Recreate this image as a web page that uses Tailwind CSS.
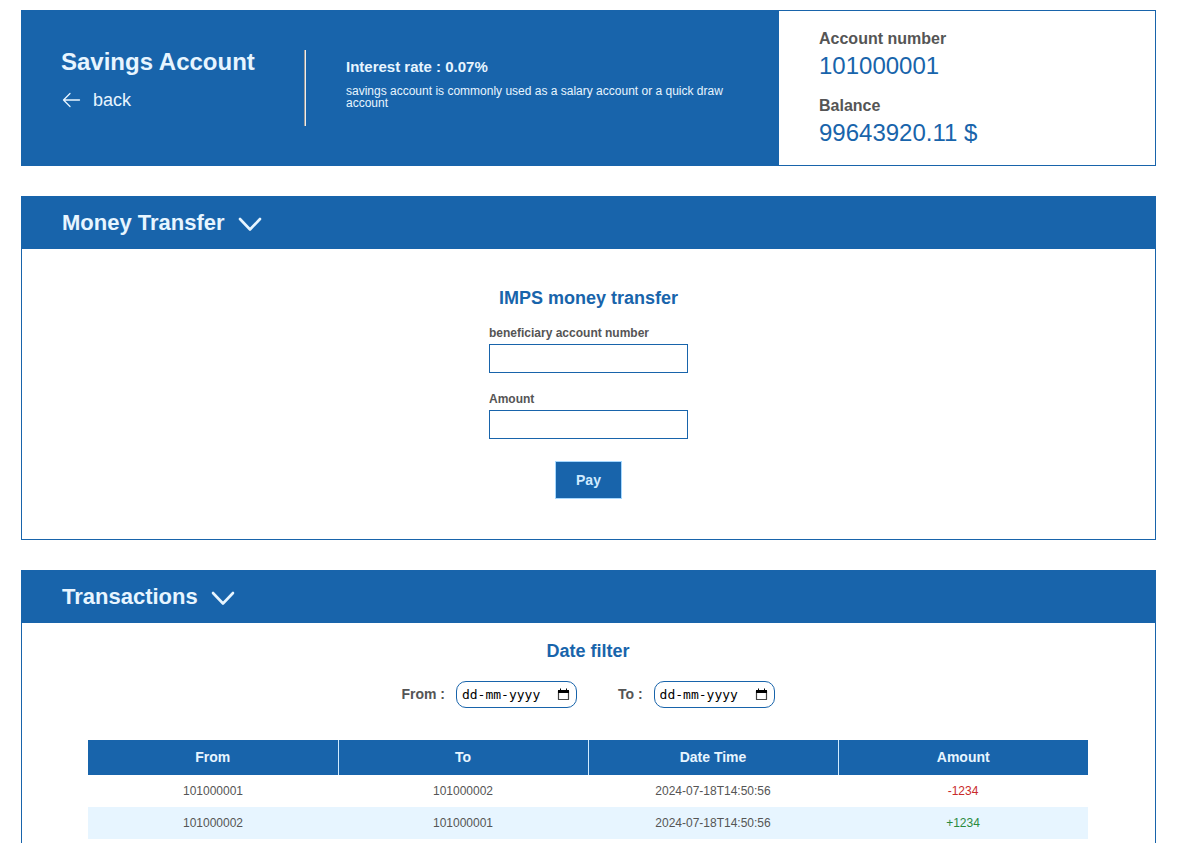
<!DOCTYPE html>
<html lang="en">
<head>
<meta charset="utf-8">
<meta name="viewport" content="width=device-width, initial-scale=1">
<title>Savings Account</title>
<script src="https://cdn.jsdelivr.net/npm/@tailwindcss/browser@4"></script>
</head>
<body class="h-screen overflow-hidden bg-white font-['Liberation_Sans',Arial,sans-serif] text-xs text-[#555555]">
<main class="flex flex-col gap-[30px] pt-[10px] pr-[30px] pl-[21px]">

  <section class="flex border border-[#1864ab]">
    <div class="flex min-w-0 flex-1 bg-[#1864ab] py-[39px] pl-[39px] text-[#e7f5ff]">
      <div class="w-[243px] shrink-0">
        <h1 class="text-2xl leading-6 font-bold whitespace-nowrap">Savings Account</h1>
        <a href="#" class="mt-4 flex items-center gap-3 text-lg leading-5">
          <svg class="h-5 w-5" viewBox="0 0 20 20" fill="none" stroke="currentColor" stroke-width="1.3" stroke-linecap="round" stroke-linejoin="round" aria-hidden="true"><path d="M18.5 10H2.5M9 3.5L2.5 10L9 16.5"/></svg>
          back
        </a>
      </div>
      <div class="h-[76px] w-[2px] shrink-0 border-l border-[#9a9a9a] bg-[#eeeeee]"></div>
      <div class="ml-10 pt-[9px] pr-10">
        <h2 class="text-[15px] leading-4 font-bold">Interest rate : 0.07%</h2>
        <p class="mt-[10px] text-xs leading-3">savings account is commonly used as a salary account or a quick draw account</p>
      </div>
    </div>
    <dl class="w-[376px] shrink-0 pt-[18px] pl-10">
      <dt class="text-base leading-5 font-bold">Account number</dt>
      <dd class="mt-[3px] text-2xl leading-7 text-[#1864ab]">101000001</dd>
      <dt class="mt-4 text-base leading-5 font-bold">Balance</dt>
      <dd class="mt-[3px] text-2xl leading-7 text-[#1864ab]">99643920.11 $</dd>
    </dl>
  </section>

  <section class="border border-[#1864ab]">
    <h2 class="bg-[#1864ab] text-[22px] leading-[52px] font-bold text-[#e7f5ff]">
      <button type="button" class="flex items-center gap-3 pl-10">Money Transfer
        <svg class="h-[26px] w-[26px]" viewBox="0 0 26 26" fill="none" stroke="currentColor" stroke-width="2.6" stroke-linecap="round" stroke-linejoin="round" aria-hidden="true"><path d="M3 9L13 19.5L23 9"/></svg>
      </button>
    </h2>
    <form class="flex flex-col items-center pt-[39px] pb-10">
      <h3 class="text-lg leading-5 font-bold text-[#1864ab]">IMPS money transfer</h3>
      <div class="mt-[17px] flex flex-col">
        <label for="beneficiary" class="leading-4 font-bold">beneficiary account number</label>
        <input id="beneficiary" type="text" class="mt-[3px] h-[29px] w-[199px] border border-[#1864ab] px-2">
        <label for="amount" class="mt-[18px] leading-4 font-bold">Amount</label>
        <input id="amount" type="text" class="mt-[3px] h-[29px] w-[199px] border border-[#1864ab] px-2">
      </div>
      <button type="button" class="mt-[22px] border border-[#a5d8ff] bg-[#1864ab] px-5 py-2 text-sm font-bold text-[#d0ebff]">Pay</button>
    </form>
  </section>

  <section class="border border-[#1864ab]">
    <h2 class="bg-[#1864ab] text-[22px] leading-[52px] font-bold text-[#e7f5ff]">
      <button type="button" class="flex items-center gap-3 pl-10">Transactions
        <svg class="h-[26px] w-[26px]" viewBox="0 0 26 26" fill="none" stroke="currentColor" stroke-width="2.6" stroke-linecap="round" stroke-linejoin="round" aria-hidden="true"><path d="M3 9L13 19.5L23 9"/></svg>
      </button>
    </h2>
    <div class="flex flex-col items-center pt-[18px] pr-px">
      <h3 class="text-lg leading-5 font-bold text-[#1864ab]">Date filter</h3>
      <div class="mt-5 flex gap-[41px]">
        <div class="flex items-center gap-[11px]">
          <label for="from" class="pb-0.5 text-sm leading-5 font-bold">From :</label>
          <div class="flex h-[27px] w-[121px] items-center rounded-[10px] border border-[#1864ab] pr-[6px] pl-[5px]">
            <input id="from" type="text" placeholder="dd-mm-yyyy" class="w-full min-w-0 font-['DejaVu_Sans_Mono',monospace] text-[13px] text-black outline-none placeholder:text-black">
            <button type="button" aria-label="Choose from date" class="shrink-0"><svg class="h-[13px] w-[13px]" viewBox="0 0 13 13" fill="none" aria-hidden="true"><path d="M1.5 3V11.5H11.5V3" stroke="#444444" stroke-width="1.2" stroke-linejoin="round"/><path d="M1 2H12V5H1ZM3 .5H4V2H3ZM9 .5H10V2H9Z" fill="#000000"/></svg></button>
          </div>
        </div>
        <div class="flex items-center gap-[11px]">
          <label for="to" class="pb-0.5 text-sm leading-5 font-bold">To :</label>
          <div class="flex h-[27px] w-[121px] items-center rounded-[10px] border border-[#1864ab] pr-[6px] pl-[5px]">
            <input id="to" type="text" placeholder="dd-mm-yyyy" class="w-full min-w-0 font-['DejaVu_Sans_Mono',monospace] text-[13px] text-black outline-none placeholder:text-black">
            <button type="button" aria-label="Choose to date" class="shrink-0"><svg class="h-[13px] w-[13px]" viewBox="0 0 13 13" fill="none" aria-hidden="true"><path d="M1.5 3V11.5H11.5V3" stroke="#444444" stroke-width="1.2" stroke-linejoin="round"/><path d="M1 2H12V5H1ZM3 .5H4V2H3ZM9 .5H10V2H9Z" fill="#000000"/></svg></button>
          </div>
        </div>
      </div>
      <table class="mt-8 mb-8 w-full max-w-[1000px] table-fixed text-center">
        <thead class="bg-[#1864ab] text-sm text-[#e7f5ff]">
          <tr class="h-[35px]">
            <th class="pb-0.5 font-bold">From</th>
            <th class="border-l border-[#d0ebff] pb-0.5 font-bold">To</th>
            <th class="border-l border-[#d0ebff] pb-0.5 font-bold">Date Time</th>
            <th class="border-l border-[#d0ebff] pb-0.5 font-bold">Amount</th>
          </tr>
        </thead>
        <tbody>
          <tr class="h-8"><td>101000001</td><td>101000002</td><td>2024-07-18T14:50:56</td><td class="text-[#c92a2a]">-1234</td></tr>
          <tr class="h-8 bg-[#e7f5ff]"><td>101000002</td><td>101000001</td><td>2024-07-18T14:50:56</td><td class="text-[#2b8a3e]">+1234</td></tr>
        </tbody>
      </table>
    </div>
  </section>
</main>
</body>
</html>
